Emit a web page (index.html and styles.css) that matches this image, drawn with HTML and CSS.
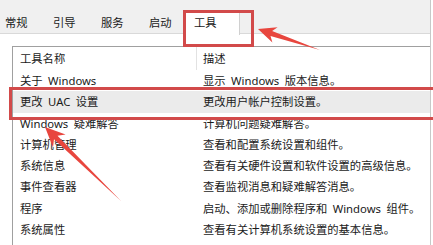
FILE: index.html
```html
<!DOCTYPE html>
<html>
  <head>
    <title>系统配置 - 工具</title>
    <link rel="stylesheet" href="styles.css">
  </head>
  <body>
    <div class="window">
      <div class="tabs">
        <div class="tab">常规</div>
        <div class="tab">引导</div>
        <div class="tab">服务</div>
        <div class="tab">启动</div>
        <div class="tab tab-selected">工具</div>
      </div>

      <div class="panel">
        <div class="tool-table">
          <div class="row header-row">
            <div class="cell name-cell">工具名称</div>
            <div class="cell desc-cell">描述</div>
          </div>
          <div class="row">
            <div class="cell name-cell">关于 Windows</div>
            <div class="cell desc-cell">显示 Windows 版本信息。</div>
          </div>
          <div class="row row-selected">
            <div class="cell name-cell">更改 UAC 设置</div>
            <div class="cell desc-cell">更改用户帐户控制设置。</div>
          </div>
          <div class="row">
            <div class="cell name-cell">Windows 疑难解答</div>
            <div class="cell desc-cell">计算机问题疑难解答。</div>
          </div>
          <div class="row">
            <div class="cell name-cell">计算机管理</div>
            <div class="cell desc-cell">查看和配置系统设置和组件。</div>
          </div>
          <div class="row">
            <div class="cell name-cell">系统信息</div>
            <div class="cell desc-cell">查看有关硬件设置和软件设置的高级信息。</div>
          </div>
          <div class="row">
            <div class="cell name-cell">事件查看器</div>
            <div class="cell desc-cell">查看监视消息和疑难解答消息。</div>
          </div>
          <div class="row">
            <div class="cell name-cell">程序</div>
            <div class="cell desc-cell">启动、添加或删除程序和 Windows 组件。</div>
          </div>
          <div class="row">
            <div class="cell name-cell">系统属性</div>
            <div class="cell desc-cell">查看有关计算机系统设置的基本信息。</div>
          </div>
        </div>
      </div>
    </div>

    <!-- annotations drawn over the screenshot -->
    <div class="mark mark-tab"></div>
    <div class="mark mark-row"></div>

    <svg class="arrows" width="433" height="245" viewBox="0 0 433 245">
      <polygon points="258,29 277.6,27.2 272.1,31.1 320,50 270.5,35.9 272.4,42.4" />
      <polygon points="45,127 65.6,134.5 57.5,135.7 121,201 54,139.3 53,147.4" />
    </svg>
  </body>
</html>
```

FILE: styles.css
```css
body {
  margin: 0;
  width: 433px;
  height: 245px;
  overflow: hidden;
  position: relative;
  background-color: white;
  color: #1a1a1a;
  font-family: "Noto Sans", "Noto Sans CJK SC", sans-serif;
  font-size: 11.3px;
}

.window {
  width: 431px;
  height: 245px;
  border-right: 1px solid #c8c8c8;
  box-sizing: border-box;
}

.tabs {
  display: flex;
  height: 34px;
  padding-top: 12px;
  box-sizing: border-box;
  background-color: #f0f0f0;
  border-bottom: 1px solid #d9d9d9;
  margin-left: -4px;
}

.tab {
  width: 48px;
  height: 22px;
  line-height: 22px;
  padding-left: 9px;
  box-sizing: border-box;
}

.tab-selected {
  width: 55px;
  height: 25px;
  margin-top: -2px;
  margin-left: -3px;
  line-height: 25px;
  background-color: white;
  border-right: 1px solid #d0d0d0;
  position: relative;
  z-index: 1;
}

.panel {
  padding-top: 12px;
  padding-left: 12px;
}

.tool-table {
  border-left: 1px solid #a0a0a0;
  border-top: 1px solid #a0a0a0;
  height: 200px;
}

.row {
  display: grid;
  grid-template-columns: 184px 1fr;
  height: 21.3px;
  line-height: 21.3px;
  white-space: nowrap;
  word-spacing: 2.5px;
}

.header-row {
  height: 23px;
  line-height: 23px;
}

.header-row .name-cell {
  border-right: 1px solid #e2e2e2;
}

.row-selected {
  background-color: #ebebeb;
}

.name-cell {
  padding-left: 7px;
}

.desc-cell {
  padding-left: 6px;
}

.mark {
  position: absolute;
  border: 3px solid #d24a4a;
}

.mark-tab {
  left: 183px;
  top: 10px;
  width: 65px;
  height: 31px;
  z-index: 2;
}

.mark-row {
  left: 9px;
  top: 87px;
  width: 430px;
  height: 27px;
}

.arrows {
  position: absolute;
  left: 0;
  top: 0;
  fill: #e8463e;
  pointer-events: none;
}
```
